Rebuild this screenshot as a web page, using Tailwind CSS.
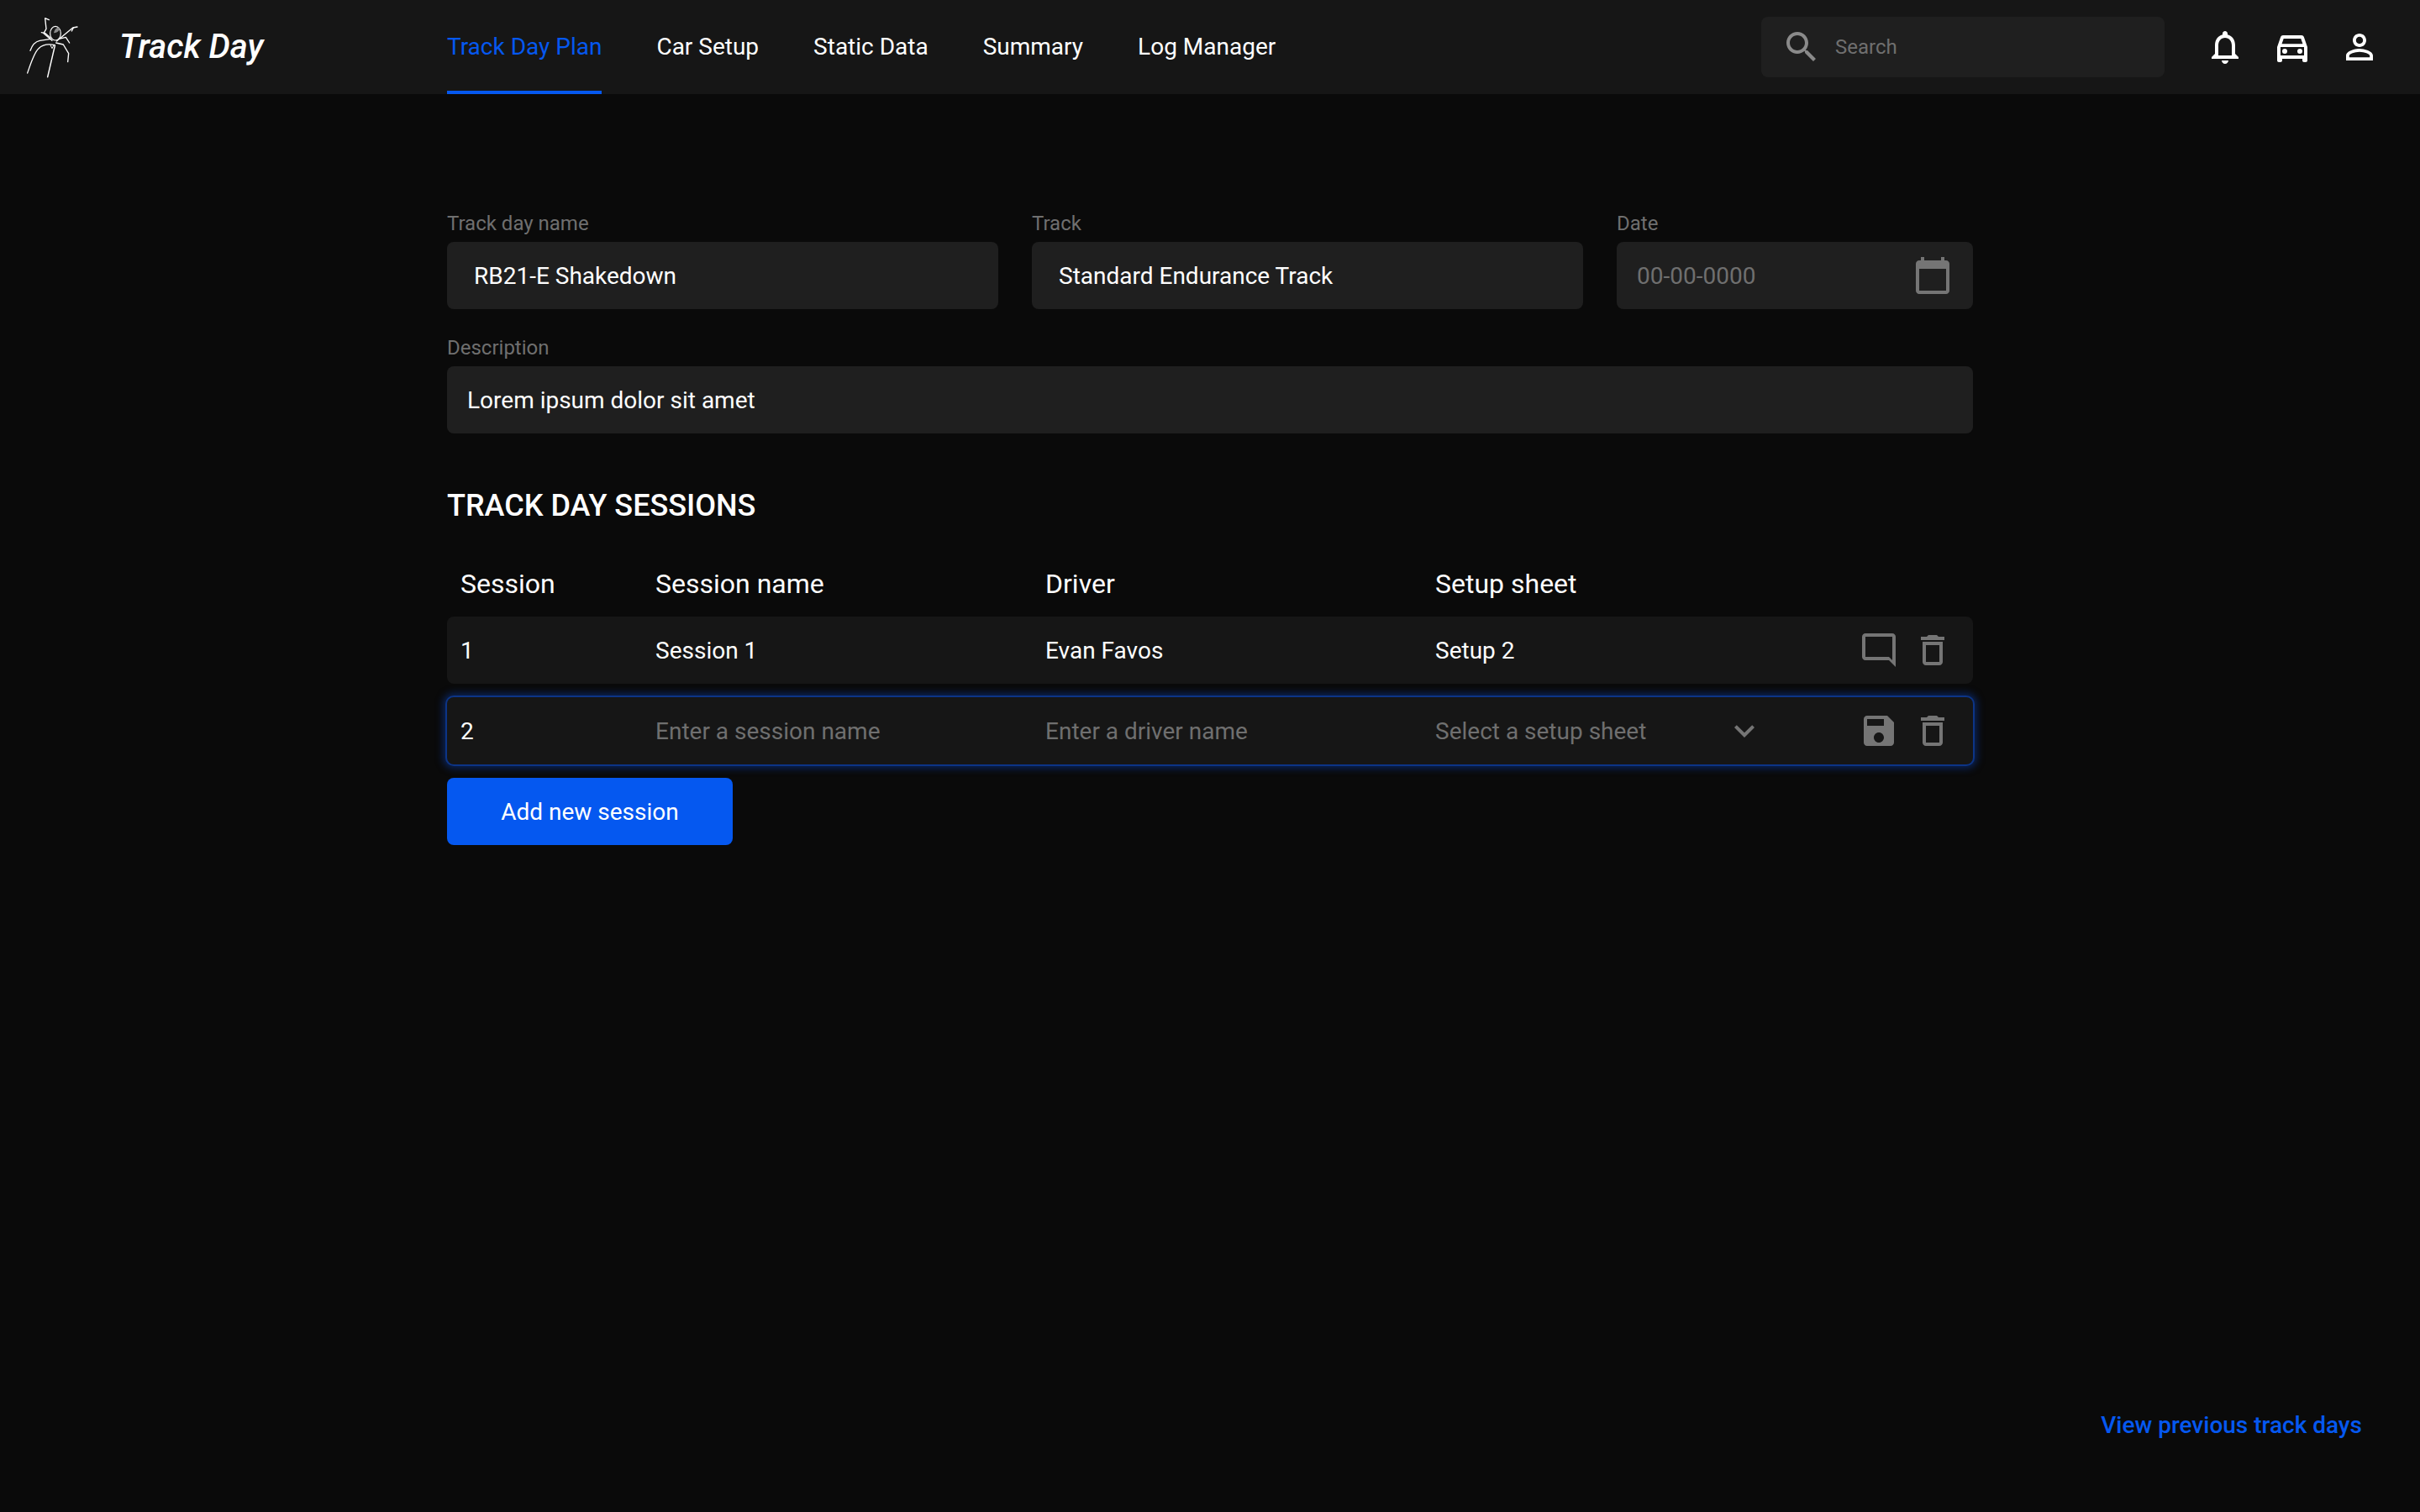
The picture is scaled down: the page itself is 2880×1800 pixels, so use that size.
<!doctype html>
<html>

<head>
    <meta charset="UTF-8" />
    <meta name="viewport" content="width=device-width, initial-scale=1.0" />
    <script src="https://cdn.jsdelivr.net/npm/@tailwindcss/browser@4"></script>
</head>

<body class="bg-[#0a0a0a] font-[Roboto,sans-serif] text-white">
    <div class="flex flex-col h-screen">

        <!-- top bar -->
        <header class="flex items-center h-[112px] bg-[#161616] shrink-0">
            <svg class="ml-[10px] w-[110px] h-[110px] shrink-0" viewBox="0 0 330 330" fill="none" stroke="#fff" stroke-width="4" stroke-linecap="round" stroke-linejoin="round">
                <ellipse cx="168" cy="116" rx="19" ry="25" stroke-width="3.5" />
                <path d="M162 115 C164 102 172 94 182 95 C184 105 178 112 162 115z" fill="#8a8a8a" stroke="none" />
                <path d="M145 68 L131 62 L135 100 L126 116 L156 142" />
                <path d="M118 113 L132 116 L150 132" />
                <path d="M246 93 L230 96 L172 144" />
                <path d="M232 96 L226 108" />
                <path d="M180 136 L205 130 L218 150" />
                <path d="M78 178 C84 160 92 146 112 142 L152 136" />
                <path d="M68 258 C80 222 92 184 108 170 C122 156 140 152 166 158" />
                <path d="M140 272 L166 160" stroke-width="4.5" />
                <path d="M212 218 L215 188 L196 156 L170 150" />
                <path d="M150 158 L156 170 L162 158" stroke-width="3" />
            </svg>
            <span class="ml-[22px] w-[390px] shrink-0 text-[40px] font-medium italic">Track Day</span>
            <nav class="flex h-full gap-[65px] text-[28px]">
                <a class="flex items-center h-full pt-[4px] border-b-4 border-[#0558f0] text-[#0558f0]">Track Day Plan</a>
                <a class="flex items-center h-full pt-[4px] border-b-4 border-transparent">Car Setup</a>
                <a class="flex items-center h-full pt-[4px] border-b-4 border-transparent">Static Data</a>
                <a class="flex items-center h-full pt-[4px] border-b-4 border-transparent">Summary</a>
                <a class="flex items-center h-full pt-[4px] border-b-4 border-transparent">Log Manager</a>
            </nav>
            <div class="flex items-center ml-auto w-[480px] h-[72px] rounded-lg bg-[#1f1f1f] pl-[24px]">
                <svg class="w-[48px] h-[48px] shrink-0 fill-[#8a8a8a]" viewBox="0 0 24 24"><path d="M15.5 14h-.79l-.28-.27C15.41 12.59 16 11.11 16 9.5 16 5.91 13.09 3 9.5 3S3 5.91 3 9.5 5.91 16 9.5 16c1.61 0 3.09-.59 4.23-1.57l.27.28v.79l5 4.99L20.49 19l-4.99-5zm-6 0C7.01 14 5 11.99 5 9.5S7.01 5 9.5 5 14 7.01 14 9.5 11.99 14 9.5 14z" /></svg>
                <span class="ml-[16px] text-[24px] text-[#6f6f6f]">Search</span>
            </div>
            <div class="flex items-center gap-[32px] ml-[48px] mr-[48px]">
                <svg class="w-[48px] h-[48px] fill-white" viewBox="0 0 24 24"><path d="M12 22c1.1 0 2-.9 2-2h-4c0 1.1.9 2 2 2zm6-6v-5c0-3.07-1.63-5.64-4.5-6.32V4c0-.83-.67-1.5-1.5-1.5s-1.5.67-1.5 1.5v.68C7.64 5.36 6 7.92 6 11v5l-2 2v1h16v-1l-2-2zm-2 1H8v-6c0-2.48 1.51-4.5 4-4.5s4 2.02 4 4.5v6z" /></svg>
                <svg class="w-[48px] h-[48px] fill-white" viewBox="0 0 24 24"><path d="M18.92 6.01C18.72 5.42 18.16 5 17.5 5h-11c-.66 0-1.21.42-1.42 1.01L3 12v8c0 .55.45 1 1 1h1c.55 0 1-.45 1-1v-1h12v1c0 .55.45 1 1 1h1c.55 0 1-.45 1-1v-8l-2.08-5.99zM6.85 7h10.29l1.08 3.11H5.77L6.85 7zM19 17H5v-5h14v5z" /><circle cx="7.5" cy="14.5" r="1.5" /><circle cx="16.5" cy="14.5" r="1.5" /></svg>
                <svg class="w-[48px] h-[48px] fill-white" viewBox="0 0 24 24"><path d="M12 5.9c1.16 0 2.1.94 2.1 2.1s-.94 2.1-2.1 2.1S9.9 9.16 9.9 8s.94-2.1 2.1-2.1m0 9c2.97 0 6.1 1.46 6.1 2.1v1.1H5.9V17c0-.64 3.13-2.1 6.1-2.1M12 4C9.79 4 8 5.79 8 8s1.79 4 4 4 4-1.79 4-4-1.79-4-4-4zm0 9c-2.67 0-8 1.34-8 4v3h16v-3c0-2.66-5.33-4-8-4z" /></svg>
            </div>
        </header>

        <main class="flex-1 flex flex-col">
            <div class="w-[1816px] ml-[532px] pt-[138px]">

                <div class="flex gap-[40px]">
                    <label class="block w-[656px]">
                        <span class="block h-[38px] text-[24px] leading-[33px] text-[#6f6f6f]">Track day name</span>
                        <input class="block w-full h-[80px] rounded-lg bg-[#1f1f1f] px-[32px] text-[28px] text-white outline-none" value="RB21-E Shakedown" />
                    </label>
                    <label class="block w-[656px]">
                        <span class="block h-[38px] text-[24px] leading-[33px] text-[#6f6f6f]">Track</span>
                        <input class="block w-full h-[80px] rounded-lg bg-[#1f1f1f] px-[32px] text-[28px] text-white outline-none" value="Standard Endurance Track" />
                    </label>
                    <label class="block w-[424px]">
                        <span class="block h-[38px] text-[24px] leading-[33px] text-[#6f6f6f]">Date</span>
                        <div class="flex items-center justify-between h-[80px] rounded-lg bg-[#1f1f1f] pl-[24px] pr-[24px]">
                            <span class="pt-[2px] text-[28px] text-[#6f6f6f]">00-00-0000</span>
                            <svg class="w-[48px] h-[48px] fill-[#757575]" viewBox="0 0 24 24"><path d="M20 3h-1V1h-2v2H7V1H5v2H4c-1.1 0-2 .9-2 2v16c0 1.1.9 2 2 2h16c1.1 0 2-.9 2-2V5c0-1.1-.9-2-2-2zm0 18H4V8h16v13z" /></svg>
                        </div>
                    </label>
                </div>

                <label class="block mt-[30px]">
                    <span class="block h-[38px] text-[24px] leading-[33px] text-[#6f6f6f]">Description</span>
                    <input class="block w-full h-[80px] rounded-lg bg-[#1f1f1f] px-[24px] text-[28px] text-white outline-none" value="Lorem ipsum dolor sit amet" />
                </label>

                <h2 class="mt-[62px] text-[36px] leading-[48px] font-medium">TRACK DAY SESSIONS</h2>

                <div class="grid grid-cols-[232px_464px_464px_1fr] items-center h-[72px] mt-[32px] pt-[2px] pl-[16px] text-[32px]">
                    <span>Session</span>
                    <span>Session name</span>
                    <span>Driver</span>
                    <span>Setup sheet</span>
                </div>

                <div class="grid grid-cols-[232px_464px_464px_1fr] items-center h-[80px] mt-[4px] pl-[16px] rounded-lg bg-[#161616] text-[28px]">
                    <span class="pt-[2px]">1</span>
                    <span class="pt-[2px]">Session 1</span>
                    <span class="pt-[2px]">Evan Favos</span>
                    <div class="flex items-center justify-between pr-[24px]">
                        <span class="pt-[2px]">Setup 2</span>
                        <div class="flex gap-[16px]">
                            <svg class="w-[48px] h-[48px] fill-[#757575] -scale-x-100" viewBox="0 0 24 24"><path d="M20 2H4c-1.1 0-2 .9-2 2v18l4-4h14c1.1 0 2-.9 2-2V4c0-1.1-.9-2-2-2zm0 14H6l-2 2V4h16v12z" /></svg>
                            <svg class="w-[48px] h-[48px] fill-[#757575]" viewBox="0 0 24 24"><path d="M6 19c0 1.1.9 2 2 2h8c1.1 0 2-.9 2-2V7H6v12zM8 9h8v10H8V9zm7.5-5l-1-1h-5l-1 1H5v2h14V4h-3.5z" /></svg>
                        </div>
                    </div>
                </div>

                <div class="grid grid-cols-[232px_464px_464px_1fr] items-center h-[80px] mt-[16px] pl-[16px] rounded-lg bg-[#161616] text-[28px] shadow-[0_0_0_2px_#0c3486,0_0_8px_5px_#0a2358]">
                    <span class="pt-[2px]">2</span>
                    <span class="pt-[2px] text-[#6f6f6f]">Enter a session name</span>
                    <span class="pt-[2px] text-[#6f6f6f]">Enter a driver name</span>
                    <div class="flex items-center pr-[24px]">
                        <span class="w-[344px] pt-[2px] text-[#6f6f6f]">Select a setup sheet</span>
                        <svg class="w-[48px] h-[48px] fill-[#757575]" viewBox="0 0 24 24"><path d="M16.59 8.59L12 13.17 7.41 8.59 6 10l6 6 6-6z" /></svg>
                        <div class="flex gap-[16px] ml-auto">
                            <svg class="w-[48px] h-[48px] fill-[#757575]" viewBox="0 0 24 24"><path d="M17 3H5c-1.11 0-2 .9-2 2v14c0 1.1.89 2 2 2h14c1.1 0 2-.9 2-2V7l-4-4zm-5 16c-1.66 0-3-1.34-3-3s1.34-3 3-3 3 1.34 3 3-1.34 3-3 3zm3-10H5V5h10v4z" /></svg>
                            <svg class="w-[48px] h-[48px] fill-[#757575]" viewBox="0 0 24 24"><path d="M6 19c0 1.1.9 2 2 2h8c1.1 0 2-.9 2-2V7H6v12zM8 9h8v10H8V9zm7.5-5l-1-1h-5l-1 1H5v2h14V4h-3.5z" /></svg>
                        </div>
                    </div>
                </div>

                <button class="block w-[340px] h-[80px] mt-[16px] pt-[2px] rounded-lg bg-[#0558f0] text-[28px] text-white">Add new session</button>
            </div>

            <div class="flex justify-end mt-auto pr-[69px] pb-[83px]">
                <a class="text-[28px] leading-[40px] font-medium text-[#0558f0]">View previous track days</a>
            </div>
        </main>
    </div>
</body>

</html>
